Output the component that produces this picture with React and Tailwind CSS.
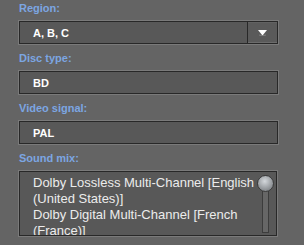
import React from "react";

function Label({ children }) {
  return (
    <div className="h-[20px] pt-0 pl-[1px] text-[11px] leading-[14px] font-bold text-[#7ca6e2]">
      {children}
    </div>
  );
}

function Field({ children, dropdown }) {
  return (
    <div className="flex h-[23px] w-[259px] ml-[1px] border border-[#282828] bg-[#585858] shadow-[0_0_0_1px_#7a7a7a]">
      <div className="flex-1 flex items-center pl-[13px] text-[11px] leading-[14px] font-bold text-white">
        {children}
      </div>
      {dropdown && (
        <div className="w-[30px] flex items-center justify-center border-l border-[#282828] bg-[#5a5a5a] shadow-[inset_0_-1px_0_#6c6c6c,inset_0_1px_0_#626262]">
          <svg width="9" height="6" viewBox="0 0 9 6">
            <path d="M0 0 H9 L4.5 5.5 Z" fill="#ffffff" />
            <path d="M1 5 L4.5 5.8 L8 5" stroke="#9a9a9a" strokeWidth="0.6" fill="none" />
          </svg>
        </div>
      )}
    </div>
  );
}

export default function App() {
  const lines = [
    "Dolby Lossless Multi-Channel [English",
    "(United States)]",
    "Dolby Digital Multi-Channel [French",
    "(France)]",
  ];
  return (
    <div className="w-[304px] h-[245px] overflow-hidden bg-[#646464] pl-[18px] pt-[1px] font-['Liberation_Sans',Arial,sans-serif]">
      <Label>Region:</Label>
      <Field dropdown>A, B, C</Field>
      <div className="h-[7px]" />
      <Label>Disc type:</Label>
      <Field>BD</Field>
      <div className="h-[7px]" />
      <Label>Video signal:</Label>
      <Field>PAL</Field>
      <div className="h-[7px]" />
      <Label>Sound mix:</Label>
      <div className="flex h-[65px] w-[258px] ml-[1px] border border-[#282828] bg-[#585858] shadow-[0_0_0_1px_#7a7a7a] overflow-hidden">
        <div className="w-[237px] pl-[13px] pt-[3px] text-[13px] leading-[16px] text-[#ececec] overflow-hidden">
          {lines.map((l) => (
            <div key={l} className="whitespace-nowrap">{l}</div>
          ))}
        </div>
        <div className="relative w-[17px] pt-[3px]">
          <div className="absolute left-[5px] top-[11px] w-[7px] h-[50px] border border-[#3c3c3c] bg-[#666666]" />
          <div className="relative w-[17px] h-[17px] rounded-full border border-[#3a3a3a] bg-[radial-gradient(circle_at_45%_35%,#d4d8dc_0%,#a4a8ac_45%,#6c7074_100%)]" />
        </div>
      </div>
    </div>
  );
}
